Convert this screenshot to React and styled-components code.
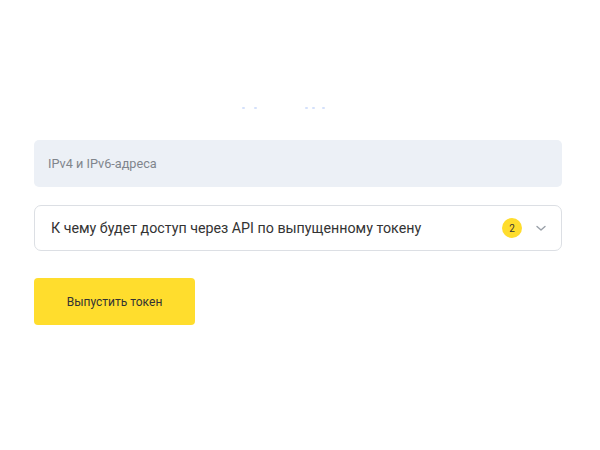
import React from "react";
import styled, { createGlobalStyle } from "styled-components";

const Global = createGlobalStyle`
  html, body { margin: 0; padding: 0; background: #fff; }
  body { font-family: Roboto, "Noto Sans", "Liberation Sans", sans-serif; -webkit-font-smoothing: antialiased; }
`;

const Page = styled.div`
  width: 600px;
  height: 450px;
  box-sizing: border-box;
  padding: 106px 38px 0 34px;
  display: flex;
  flex-direction: column;
`;

const Traces = styled.div`
  height: 4px;
  position: relative;
  margin-bottom: 30px;
`;

const Trace = styled.span`
  position: absolute;
  top: 1px;
  width: 3px;
  height: 2px;
  border-radius: 1px;
  background: #d4e1fb;
`;

const Field = styled.div`
  height: 47px;
  border-radius: 5px;
  background: #ecf0f6;
  display: flex;
  align-items: center;
  padding: 0 14px;
  font-size: 12.7px;
  color: #80858c;
`;

const Select = styled.div`
  margin-top: 18px;
  height: 46px;
  box-sizing: border-box;
  border: 1px solid #dcdfe4;
  border-radius: 7px;
  display: flex;
  align-items: center;
  padding: 0 14px 0 16px;
  font-size: 14.25px;
  color: #333;
`;

const Label = styled.span`
  flex: 1;
`;

const Badge = styled.span`
  width: 20px;
  height: 20px;
  border-radius: 50%;
  background: #ffdd2d;
  color: #333;
  font-size: 10px;
  display: flex;
  align-items: center;
  justify-content: center;
  margin-right: 13px;
`;

const Button = styled.button`
  margin-top: 27px;
  align-self: flex-start;
  width: 161px;
  height: 47px;
  border: none;
  border-radius: 4px;
  background: #ffdd2d;
  font-family: inherit;
  font-size: 12px;
  color: #333;
  padding: 0;
`;

const Chevron = () => (
  <svg width="12" height="12" viewBox="0 0 12 12" fill="none">
    <path d="M2 4.5l4 3.5 4-3.5" stroke="#9aa0a8" strokeWidth="1.4" strokeLinecap="round" strokeLinejoin="round" />
  </svg>
);

export default function App() {
  return (
    <>
      <Global />
      <Page>
        <Traces>
          {[208, 220, 271, 278, 288].map((x) => (
            <Trace key={x} style={{ left: x }} />
          ))}
        </Traces>
        <Field>IPv4 и IPv6-адреса</Field>
        <Select>
          <Label>К чему будет доступ через API по выпущенному токену</Label>
          <Badge>2</Badge>
          <Chevron />
        </Select>
        <Button>Выпустить токен</Button>
      </Page>
    </>
  );
}
